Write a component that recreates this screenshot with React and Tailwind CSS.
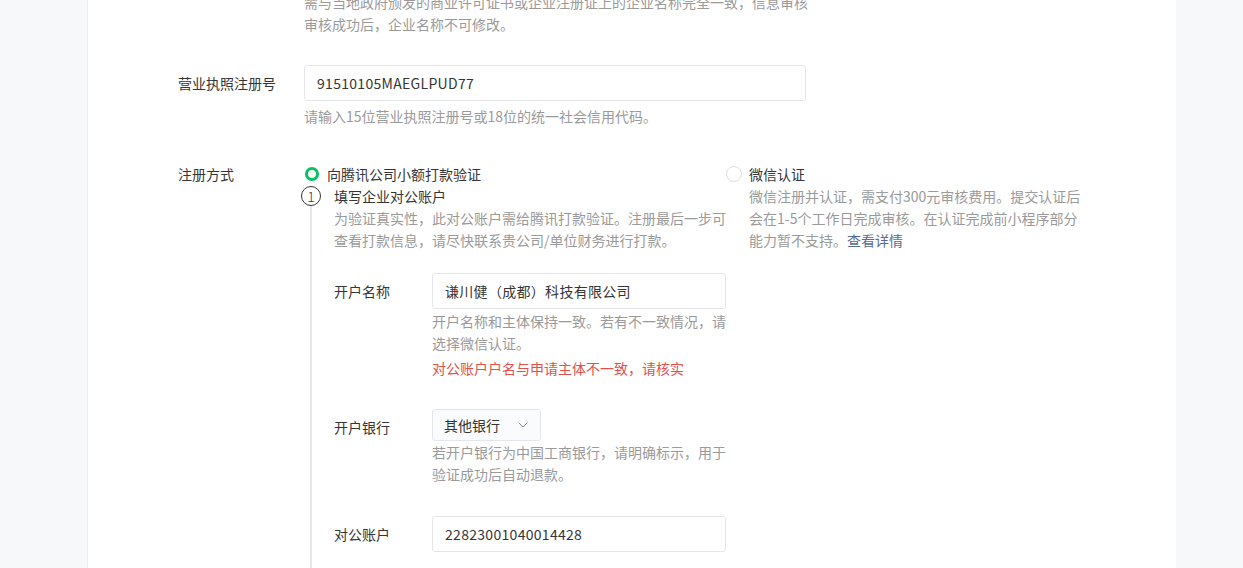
import { ChevronDown } from 'lucide-react'

const FONT = { fontFamily: '"Noto Sans CJK SC", "Noto Sans", sans-serif' }

function Help({ children, className = '' }) {
  return <div className={`text-[14px] leading-[22px] text-[#9a9a9a] ${className}`}>{children}</div>
}

function TextInput({ value, width }) {
  return (
    <div className={`h-[36px] ${width} flex items-center px-3 border border-[#e4e6eb] rounded-[3px] bg-white text-[14px] text-[#353535] tracking-[0.3px]`}>
      {value}
    </div>
  )
}

function SubRow({ label, children, className = '' }) {
  return (
    <div className={`flex ${className}`}>
      <div className="w-[98px] shrink-0 text-[14px] leading-[36px] text-[#353535]">{label}</div>
      <div className="flex flex-col">{children}</div>
    </div>
  )
}

export default function App() {
  return (
    <div style={FONT} className="w-full h-[568px] overflow-hidden bg-[#f7f8fa]">
      <div className="ml-[87px] w-[1089px] h-full bg-white border-l border-[#eef0f3] pl-[90px] overflow-hidden">
        {/* company name hint (top, cut off) */}
        <div className="flex -mt-[9px]">
          <div className="w-[126px] shrink-0" />
          <Help className="w-[510px]">
            需与当地政府颁发的商业许可证书或企业注册证上的企业名称完全一致，信息审核
            <br />
            审核成功后，企业名称不可修改。
          </Help>
        </div>

        {/* licence number */}
        <div className="flex mt-[30px]">
          <div className="w-[126px] shrink-0 text-[14px] leading-[36px] text-[#353535]">营业执照注册号</div>
          <div className="flex flex-col">
            <TextInput value="91510105MAEGLPUD77" width="w-[502px]" />
            <Help className="mt-[4px]">请输入15位营业执照注册号或18位的统一社会信用代码。</Help>
          </div>
        </div>

        {/* registration method */}
        <div className="flex mt-[36px]">
          <div className="w-[126px] shrink-0 text-[14px] leading-[22px] text-[#353535]">注册方式</div>
          <div className="flex">
            <div className="w-[422px] shrink-0 flex flex-col">
              <div className="flex items-center h-[22px]">
                <span className="ml-[1px] w-[14px] h-[14px] rounded-full border-[3px] border-[#07c160] bg-white" />
                <span className="ml-[8px] text-[14px] text-[#353535]">向腾讯公司小额打款验证</span>
              </div>
              <div className="flex">
                <div className="-ml-[3px] w-[20px] shrink-0 flex flex-col items-center pt-[1px]">
                  <div className="w-[20px] h-[20px] rounded-full border border-[#353535] flex items-center justify-center text-[14px] leading-none font-light text-[#353535]">
                    1
                  </div>
                  <div className="w-[2px] h-[400px] bg-[#e6e8ec]" />
                </div>
                <div className="ml-[13px] flex flex-col">
                  <div className="text-[14px] leading-[22px] text-[#353535]">填写企业对公账户</div>
                  <Help className="w-[394px]">
                    为验证真实性，此对公账户需给腾讯打款验证。注册最后一步可查看打款信息，请尽快联系贵公司/单位财务进行打款。
                  </Help>

                  <SubRow label="开户名称" className="mt-[22px]">
                    <TextInput value="谦川健（成都）科技有限公司" width="w-[294px]" />
                    <Help className="mt-[1px] w-[296px]">开户名称和主体保持一致。若有不一致情况，请选择微信认证。</Help>
                    <div className="mt-[3px] text-[14px] leading-[22px] text-[#e3504b]">对公账户户名与申请主体不一致，请核实</div>
                  </SubRow>

                  <SubRow label="开户银行" className="mt-[30px]">
                    <div className="h-[32px] w-[109px] flex items-center justify-between pl-[11px] pr-[9px] border border-[#e4e6eb] rounded-[3px] bg-[#fafbfc] text-[14px] text-[#353535]">
                      <span>其他银行</span>
                      <ChevronDown className="w-[16px] h-[16px] text-[#8a8a8a]" strokeWidth={1.5} />
                    </div>
                    <Help className="w-[296px]">若开户银行为中国工商银行，请明确标示，用于验证成功后自动退款。</Help>
                  </SubRow>

                  <SubRow label="对公账户" className="mt-[31px]">
                    <TextInput value="22823001040014428" width="w-[294px]" />
                  </SubRow>
                </div>
              </div>
            </div>

            <div className="flex flex-col">
              <div className="flex items-center h-[22px]">
                <span className="w-[16px] h-[16px] rounded-full border border-[#dcdee2] bg-white" />
                <span className="ml-[7px] text-[14px] text-[#353535]">微信认证</span>
              </div>
              <Help className="ml-[23px] w-[340px]">
                微信注册并认证，需支付300元审核费用。提交认证后会在1-5个工作日完成审核。在认证完成前小程序部分能力暂不支持。<span className="text-[#576b95]">查看详情</span>
              </Help>
            </div>
          </div>
        </div>
      </div>
    </div>
  )
}
